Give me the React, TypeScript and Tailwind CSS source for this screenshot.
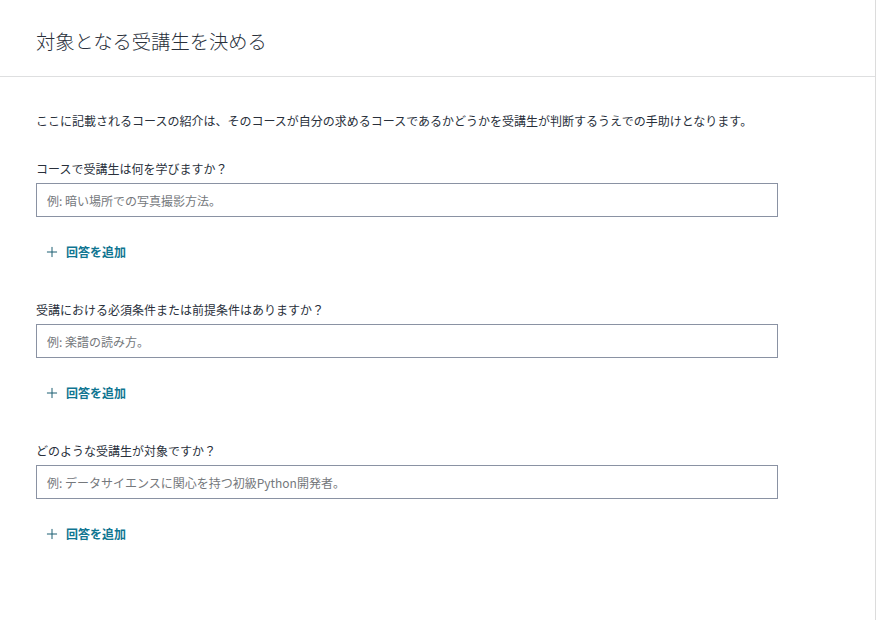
import { Plus } from 'lucide-react';

const questions = [
    { label: 'コースで受講生は何を学びますか？', placeholder: '例: 暗い場所での写真撮影方法。' },
    { label: '受講における必須条件または前提条件はありますか？', placeholder: '例: 楽譜の読み方。' },
    { label: 'どのような受講生が対象ですか？', placeholder: '例: データサイエンスに関心を持つ初級Python開発者。' },
];

function QuestionBlock({ label, placeholder }: { label: string; placeholder: string }) {
    return (
        <div className="flex flex-col">
            <label className="text-[12px] leading-[16px] text-[#29303b] mb-[6px]">{label}</label>
            <input
                type="text"
                placeholder={placeholder}
                className="w-[742px] h-[34px] px-[10px] border border-[#8a92a3] text-[12px] text-[#29303b] placeholder:text-[#75787c] outline-none"
            />
            <button className="self-start flex items-center gap-[6px] h-[40px] mt-[15px] pl-[8px] pr-[10px] text-[12px] font-bold text-[#0f7591]">
                <Plus size={16} strokeWidth={1.5} className="text-[#1c5f73]" />
                <span>回答を追加</span>
            </button>
        </div>
    );
}

export default function App() {
    return (
        <div
            className="w-[876px] h-[620px] bg-white border-r border-[#dcdcdc] overflow-hidden"
            style={{ fontFamily: '"Noto Sans CJK JP", "Noto Sans", sans-serif' }}
        >
            <header className="h-[77px] flex items-center px-[36px] border-b border-[#dedfe0]">
                <h2 className="text-[19.3px] font-light text-[#29303b] mt-[7px]">対象となる受講生を決める</h2>
            </header>

            <div className="px-[36px] pt-[35px]">
                <p className="text-[12px] leading-[18px] text-[#29303b] mb-[31px]">
                    ここに記載されるコースの紹介は、そのコースが自分の求めるコースであるかどうかを受講生が判断するうえでの手助けとなります。
                </p>

                <div className="flex flex-col gap-[30px]">
                    {questions.map((q) => (
                        <QuestionBlock key={q.label} label={q.label} placeholder={q.placeholder} />
                    ))}
                </div>
            </div>
        </div>
    );
}
